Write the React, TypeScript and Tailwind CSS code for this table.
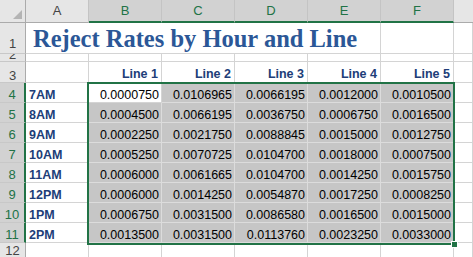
import React from 'react';

const rows: [string, string[]][] = [
  ['7AM', ['0.0000750', '0.0106965', '0.0066195', '0.0012000', '0.0010500']],
  ['8AM', ['0.0004500', '0.0066195', '0.0036750', '0.0006750', '0.0016500']],
  ['9AM', ['0.0002250', '0.0021750', '0.0088845', '0.0015000', '0.0012750']],
  ['10AM', ['0.0005250', '0.0070725', '0.0104700', '0.0018000', '0.0007500']],
  ['11AM', ['0.0006000', '0.0061665', '0.0104700', '0.0014250', '0.0015750']],
  ['12PM', ['0.0006000', '0.0014250', '0.0054870', '0.0017250', '0.0008250']],
  ['1PM', ['0.0006750', '0.0031500', '0.0086580', '0.0016500', '0.0015000']],
  ['2PM', ['0.0013500', '0.0031500', '0.0113760', '0.0023250', '0.0033000']],
];

const ColHead = ({ label, active }: { label: string; active?: boolean }) => (
  <div
    className={`flex items-center justify-center text-[13px] border-r border-r-[#c4c4c4] ${
      active
        ? 'bg-[#d2d2d2] text-[#217346] border-b-2 border-b-[#217346]'
        : 'bg-[#e6e6e6] text-[#444444] border-b border-b-[#ababab]'
    }`}
  >
    {label}
  </div>
);

const RowHead = ({ n, active, pad = 'pb-[1px]' }: { n: number; active?: boolean; pad?: string }) => (
  <div
    className={`flex items-end justify-center overflow-hidden text-[13px] leading-none border-b border-b-[#c8c8c8] ${pad} ${
      active
        ? 'bg-[#d2d2d2] text-[#217346] border-r-2 border-r-[#217346]'
        : 'bg-[#e6e6e6] text-[#444444] border-r border-r-[#ababab]'
    }`}
  >
    {n}
  </div>
);

const Cell = ({ children, className = '' }: { children?: React.ReactNode; className?: string }) => (
  <div className={`flex items-end overflow-hidden border-r border-b border-[#d4d4d4] ${className}`}>{children}</div>
);

export default function App() {
  return (
    <div className="relative w-[473px] h-[257px] overflow-hidden bg-white font-['Liberation_Sans',Arial,sans-serif]">
      <div className="grid grid-cols-[26px_63px_73px_73px_73px_73px_73px_1fr] grid-rows-[23px_31px_8px_21px_repeat(9,20px)]">
        {/* column headers */}
        <div className="flex items-end justify-end p-[3px] bg-[#e6e6e6] border-r border-b border-[#ababab]">
          <div className="w-[9px] h-[9px] bg-[#b4b4b4] [clip-path:polygon(100%_0,100%_100%,0_100%)]" />
        </div>
        <ColHead label="A" />
        {['B', 'C', 'D', 'E', 'F'].map((c) => (
          <ColHead key={c} label={c} active />
        ))}
        <div className="bg-[#e6e6e6] border-b border-b-[#ababab]" />

        {/* row 1 - title */}
        <RowHead n={1} pad="pb-[3px]" />
        <Cell className="col-span-5 pl-[7px] pb-[2px]">
          <span className="font-['Liberation_Serif',serif] font-bold text-[24.5px] leading-none text-[#2b5797] whitespace-nowrap">
            Reject Rates by Hour and Line
          </span>
        </Cell>
        <Cell />
        <Cell />

        {/* row 2 */}
        <RowHead n={2} pad="pb-0" />
        {Array.from({ length: 7 }).map((_, i) => (
          <Cell key={i} />
        ))}

        {/* row 3 - line headers */}
        <RowHead n={3} pad="pb-0" />
        <Cell />
        {[1, 2, 3, 4, 5].map((l) => (
          <Cell key={l} className="justify-end pr-[3px] pb-[2px] text-[12.5px] leading-none font-bold text-[#203d78]">
            Line {l}
          </Cell>
        ))}
        <Cell />

        {/* data rows */}
        {rows.map(([label, vals], r) => (
          <React.Fragment key={label}>
            <RowHead n={r + 4} active />
            <Cell className="pl-[3px] pb-[1px] text-[12.5px] leading-none font-bold text-[#203d78]">{label}</Cell>
            {vals.map((v, i) => (
              <Cell
                key={i}
                className={`justify-end pr-[2px] pb-[1px] text-[12.5px] leading-none text-black ${
                  r === 0 && i === 0 ? 'bg-white' : 'bg-[#c6c6c6] border-[#dcdcdc]'
                }`}
              >
                {v}
              </Cell>
            ))}
            <Cell />
          </React.Fragment>
        ))}

        {/* row 12 */}
        <RowHead n={12} pad="pb-[5px]" />
        {Array.from({ length: 7 }).map((_, i) => (
          <Cell key={i} />
        ))}
      </div>

      {/* selection outline + fill handle */}
      <div className="absolute left-[87px] top-[82px] w-[368px] h-[163px] border-2 border-[#217346] pointer-events-none" />
      <div className="absolute left-[451px] top-[241px] w-[7px] h-[7px] bg-[#217346] border border-white" />
    </div>
  );
}
